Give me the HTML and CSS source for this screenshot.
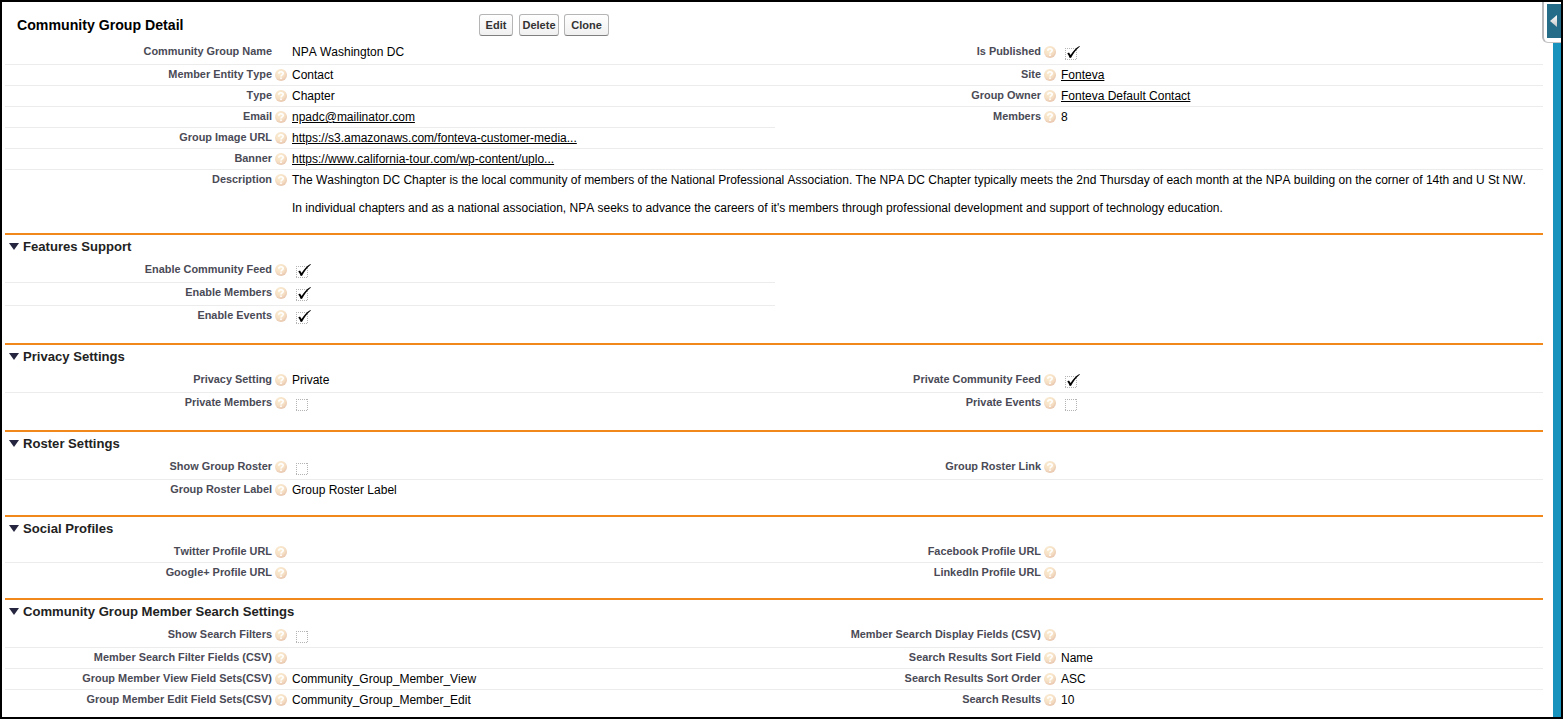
FILE: index.html
```html
<!DOCTYPE html>
<html lang="en">
<head>
<meta charset="utf-8">
<title>Community Group Detail</title>
<link rel="stylesheet" href="styles.css">
</head>
<body>
<svg class="defs" width="0" height="0">
  <defs>
    <radialGradient id="orb" cx="40%" cy="30%" r="75%">
      <stop offset="0" stop-color="#fbeed3"/><stop offset=".6" stop-color="#f5dfc4"/><stop offset="1" stop-color="#e6c2ab"/>
    </radialGradient>
    <linearGradient id="silver" x1="0" y1="0" x2="0" y2="1">
      <stop offset="0" stop-color="#fff"/><stop offset="1" stop-color="#c4c4c4"/>
    </linearGradient>
    <symbol id="help" viewBox="0 0 12 12">
      <circle cx="6" cy="6" r="6" fill="url(#orb)"/>
      <path d="M3.8 4.8C3.8 2.2 8.2 2.2 8.2 4.6C8.2 6 6 5.8 6 7.5M6 8.4V10" fill="none" stroke="#fff" stroke-width="1.6"/>
    </symbol>
    <symbol id="box" viewBox="0 0 21 16">
      <path d="M4 4.5H16M4 15.5H16M4.5 4V16M15.5 4V16" fill="none" stroke="#b4b4b4" stroke-dasharray="1 1"/>
    </symbol>
    <symbol id="checked" viewBox="0 0 21 16">
      <use href="#box"/>
      <path d="M6.2 9.4L8 8.4L9.6 11C11.8 7.4 14.6 4.2 18.4 2L18.9 2.6C15.1 5.8 12.3 9.6 10.1 13.8L8.7 14C8 12 7.4 10.7 6.2 9.4Z" fill="#000"/>
    </symbol>
  </defs>
</svg>
<div class="page">
  <main class="detail">
    <header class="head">
      <h1>Community Group Detail</h1>
      <div class="buttons"><button class="edit">Edit</button><button class="delete">Delete</button><button class="clone">Clone</button></div>
    </header>
    <section class="fields">
      <div class="row tall">
        <div class="label">Community Group Name</div><i></i><div class="value">NPA Washington DC</div>
        <div class="label">Is Published</div><svg class="help"><use href="#help"/></svg><svg class="check"><use href="#checked"/></svg>
      </div>
      <div class="row">
        <div class="label">Member Entity Type</div><svg class="help"><use href="#help"/></svg><div class="value">Contact</div>
        <div class="label">Site</div><svg class="help"><use href="#help"/></svg><div class="value"><a>Fonteva</a></div>
      </div>
      <div class="row">
        <div class="label">Type</div><svg class="help"><use href="#help"/></svg><div class="value">Chapter</div>
        <div class="label">Group Owner</div><svg class="help"><use href="#help"/></svg><div class="value"><a>Fonteva Default Contact</a></div>
      </div>
      <div class="row half">
        <div class="label">Email</div><svg class="help"><use href="#help"/></svg><div class="value"><a>npadc@mailinator.com</a></div>
        <div class="label">Members</div><svg class="help"><use href="#help"/></svg><div class="value">8</div>
      </div>
      <div class="row">
        <div class="label">Group Image URL</div><svg class="help"><use href="#help"/></svg><div class="value"><a>https://s3.amazonaws.com/fonteva-customer-media...</a></div>
      </div>
      <div class="row">
        <div class="label">Banner</div><svg class="help"><use href="#help"/></svg><div class="value"><a>https://www.california-tour.com/wp-content/uplo...</a></div>
      </div>
      <div class="row description">
        <div class="label">Description</div><svg class="help"><use href="#help"/></svg>
        <div class="value wide"><p class="first">The Washington DC Chapter is the local community of members of the National Professional Association. The NPA DC Chapter typically meets the 2nd Thursday of each month at the NPA building on the corner of 14th and U St NW.</p><p>In individual chapters and as a national association, NPA seeks to advance the careers of it's members through professional development and support of technology education.</p></div>
      </div>
    </section>

    <h2>Features Support</h2>
    <section class="fields">
      <div class="row tall half"><div class="label">Enable Community Feed</div><svg class="help"><use href="#help"/></svg><svg class="check"><use href="#checked"/></svg></div>
      <div class="row tall half"><div class="label">Enable Members</div><svg class="help"><use href="#help"/></svg><svg class="check"><use href="#checked"/></svg></div>
      <div class="row tall last"><div class="label">Enable Events</div><svg class="help"><use href="#help"/></svg><svg class="check"><use href="#checked"/></svg></div>
    </section>

    <h2>Privacy Settings</h2>
    <section class="fields">
      <div class="row tall">
        <div class="label">Privacy Setting</div><svg class="help"><use href="#help"/></svg><div class="value">Private</div>
        <div class="label">Private Community Feed</div><svg class="help"><use href="#help"/></svg><svg class="check"><use href="#checked"/></svg>
      </div>
      <div class="row tall last">
        <div class="label">Private Members</div><svg class="help"><use href="#help"/></svg><svg class="check"><use href="#box"/></svg>
        <div class="label">Private Events</div><svg class="help"><use href="#help"/></svg><svg class="check"><use href="#box"/></svg>
      </div>
    </section>

    <h2>Roster Settings</h2>
    <section class="fields">
      <div class="row tall">
        <div class="label">Show Group Roster</div><svg class="help"><use href="#help"/></svg><svg class="check"><use href="#box"/></svg>
        <div class="label">Group Roster Link</div><svg class="help"><use href="#help"/></svg>
      </div>
      <div class="row last">
        <div class="label">Group Roster Label</div><svg class="help"><use href="#help"/></svg><div class="value">Group Roster Label</div>
      </div>
    </section>

    <h2>Social Profiles</h2>
    <section class="fields">
      <div class="row">
        <div class="label">Twitter Profile URL</div><svg class="help"><use href="#help"/></svg><i></i>
        <div class="label">Facebook Profile URL</div><svg class="help"><use href="#help"/></svg>
      </div>
      <div class="row last">
        <div class="label">Google+ Profile URL</div><svg class="help"><use href="#help"/></svg><i></i>
        <div class="label">LinkedIn Profile URL</div><svg class="help"><use href="#help"/></svg>
      </div>
    </section>

    <h2>Community Group Member Search Settings</h2>
    <section class="fields">
      <div class="row tall">
        <div class="label">Show Search Filters</div><svg class="help"><use href="#help"/></svg><svg class="check"><use href="#box"/></svg>
        <div class="label">Member Search Display Fields (CSV)</div><svg class="help"><use href="#help"/></svg>
      </div>
      <div class="row">
        <div class="label">Member Search Filter Fields (CSV)</div><svg class="help"><use href="#help"/></svg><i></i>
        <div class="label">Search Results Sort Field</div><svg class="help"><use href="#help"/></svg><div class="value">Name</div>
      </div>
      <div class="row">
        <div class="label">Group Member View Field Sets(CSV)</div><svg class="help"><use href="#help"/></svg><div class="value">Community_Group_Member_View</div>
        <div class="label">Search Results Sort Order</div><svg class="help"><use href="#help"/></svg><div class="value">ASC</div>
      </div>
      <div class="row last">
        <div class="label">Group Member Edit Field Sets(CSV)</div><svg class="help"><use href="#help"/></svg><div class="value">Community_Group_Member_Edit</div>
        <div class="label">Search Results</div><svg class="help"><use href="#help"/></svg><div class="value">10</div>
      </div>
    </section>
  </main>
  <aside class="sidebar">
    <div class="handle"><div class="handle-face"><svg width="7" height="12" viewBox="0 0 7 12"><path d="M7 0V12L0 6Z" fill="url(#silver)"/></svg></div></div>
  </aside>
</div>
</body>
</html>
```

FILE: styles.css
```css
* { box-sizing: border-box; }
body { margin: 0; font-family: "Liberation Sans", Arial, sans-serif; font-size: 12px; font-kerning: none; color: #000; background: #fff; }
.defs { position: absolute; }
.page { display: flex; width: 1563px; height: 719px; border: 2px solid #000; overflow: hidden; }
.detail { width: 1538px; margin-left: 3px; flex: none; }

.head { display: flex; height: 40px; padding: 12px 0 0 12px; }
h1 { width: 462px; margin: 0; font-size: 14.15px; line-height: 22px; }
.buttons { display: flex; }
button { height: 22px; padding: 0; font: bold 11px/19px "Liberation Sans", Arial, sans-serif; color: #333; border: 1px solid #b5b5b5; border-bottom-color: #7f7f7f; border-radius: 3px; background: linear-gradient(#fff, #f0f0f0); }
.edit { width: 34px; margin-right: 6px; }
.delete { width: 40px; margin-right: 5px; }
.clone { width: 45px; }

.row { display: grid; grid-template-columns: 267px 20px 482px 267px 20px 482px; height: 21px; align-items: start; border-bottom: 1px solid #ececec; }
.row.tall { height: 23px; }
.row.half { border-bottom: 0; background: linear-gradient(#ececec, #ececec) 0 100% / 770px 1px no-repeat; }
.row.last, .row.description { border-bottom: 0; }
.row.description { height: 63px; }
.label { text-align: right; font-size: 10.92px; font-weight: bold; line-height: 18px; color: #4a4a56; white-space: nowrap; }
.help { width: 12px; height: 12px; margin: 4px 0 0 3px; }
.value { line-height: 20px; white-space: nowrap; }
.value a { text-decoration: underline; text-underline-offset: 1px; }
.value p { margin: 0; line-height: 20px; }
.value .first { margin-bottom: 8px; }
.check { width: 21px; height: 16px; margin-top: 2px; }

h2 { height: 27px; margin: 0; padding: 1px 0 0 18px; border-top: 2px solid #f0881c; font-size: 13.1px; line-height: 21px; color: #222; }
h2::before { content: ""; float: left; width: 10px; height: 7px; margin: 7px 0 0 -14px; background: #25253f; clip-path: polygon(0 0, 100% 0, 50% 100%); }
h2:not(:first-of-type) { margin-top: 14px; }

.sidebar { width: 19px; margin-left: -1px; flex: none; background: linear-gradient(#1793bd, #1793bd) 100% 0 / 8px 100% no-repeat; }
.handle { height: 41px; padding: 2px 0 4px 4px; border-left: 2px solid #b7b8bc; border-bottom: 1px solid #c5c5c8; border-bottom-left-radius: 6px; background: #fff; }
.handle-face { display: flex; align-items: center; justify-content: flex-end; height: 34px; width: 14px; margin-left: -1px; padding-right: 4px; background: #246c88; }
```
